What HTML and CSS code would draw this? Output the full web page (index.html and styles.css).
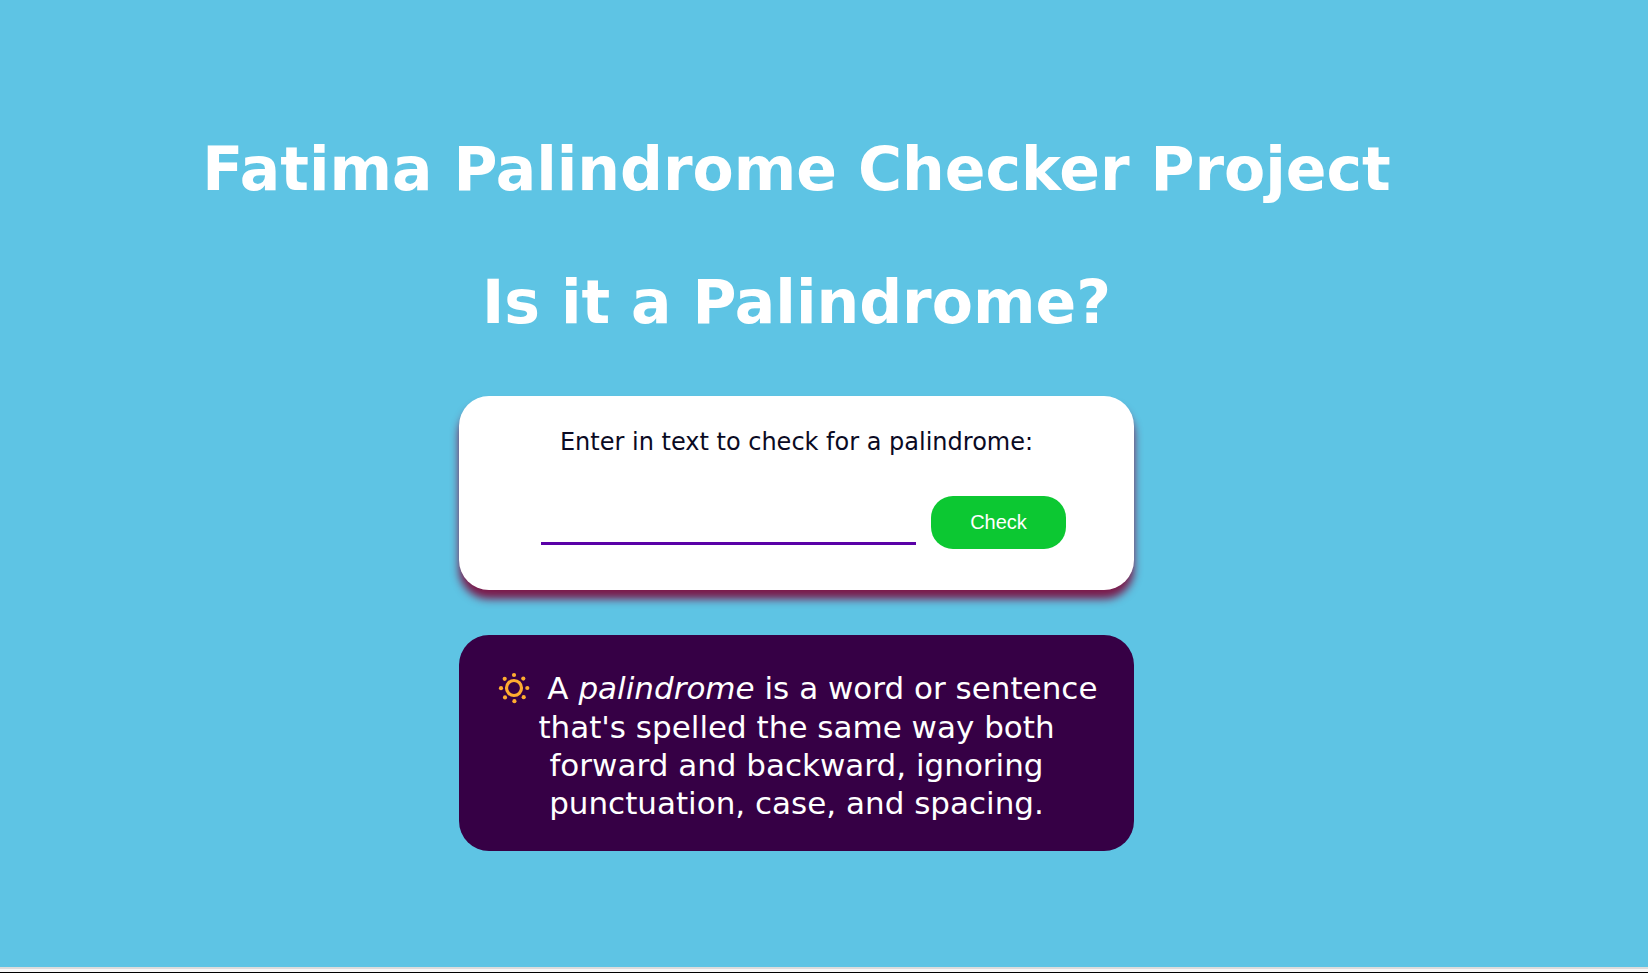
FILE: index.html
```html
<!DOCTYPE html>
<html lang="en">
<head>
<meta charset="utf-8">
<meta name="viewport" content="width=device-width, initial-scale=1">
<title>Palindrome Checker</title>
<link rel="stylesheet" href="styles.css">
</head>
<body>
<main class="page">
  <h1 class="title">Fatima Palindrome Checker Project</h1>
  <h1 class="title">Is it a Palindrome?</h1>
  <form class="checker">
    <label class="checker-label" for="text-input">Enter in text to check for a palindrome:</label>
    <div class="checker-row">
      <input class="checker-input" id="text-input" type="text">
      <button class="checker-button" type="button">Check</button>
    </div>
  </form>
  <section class="definition">
    <p class="definition-text">
      <svg class="sun" viewBox="0 0 40 40" aria-hidden="true">
        <circle cx="20" cy="20" r="7.5" fill="none" stroke="#ffac30" stroke-width="3.2"/>
        <g fill="#ffac30">
          <circle cx="20" cy="7" r="2.1"/><circle cx="20.4" cy="33.2" r="2.1"/>
          <circle cx="7" cy="20.2" r="2.1"/><circle cx="33.3" cy="20" r="2.1"/>
          <circle cx="10.7" cy="10.8" r="2.1"/><circle cx="29.3" cy="10.6" r="2.1"/>
          <circle cx="11" cy="29.4" r="2.1"/><circle cx="29.7" cy="29.2" r="2.1"/>
        </g>
      </svg>
      A <em>palindrome</em> is a word or sentence that's spelled the same way both forward and backward, ignoring punctuation, case, and spacing.
    </p>
  </section>
</main>
<footer class="edge"></footer>
</body>
</html>
```
FILE: styles.css
```css
* {
  box-sizing: border-box;
}

body {
  margin: 0;
  min-height: 100vh;
  display: flex;
  flex-direction: column;
  background: #5ec4e4;
  color: #fff;
  font-family: Verdana, "DejaVu Sans", sans-serif;
}

.page {
  flex: 1;
  display: flex;
  flex-direction: column;
  align-items: center;
  padding: 133px 55px 0 0;
}

.title {
  margin: 0 0 60px;
  font-size: 60px;
  line-height: 73px;
  text-align: center;
}

.title + .title {
  margin-bottom: 57px;
}

.checker,
.definition {
  width: 100%;
  max-width: 675px;
  border-radius: 30px;
}

.checker {
  display: flex;
  flex-direction: column;
  align-items: center;
  margin-bottom: 45px;
  padding: 32px 0 41px;
  background: #fff;
  box-shadow: 0 9px 9px #7b1a4b;
}

.checker-label {
  margin-bottom: 39px;
  color: #0a0a23;
  font-size: 24px;
  line-height: 29px;
}

.checker-row {
  display: flex;
  gap: 15px;
  padding-left: 14px;
}

.checker-input {
  width: 375px;
  height: 49px;
  border: 0;
  border-bottom: 3px solid #5a01a7;
  background: transparent;
  font-size: 20px;
  text-align: center;
  outline: none;
}

.checker-button {
  width: 135px;
  height: 53px;
  border: 0;
  border-radius: 22px;
  background: #0cc832;
  color: #fff;
  font-family: "Liberation Sans", Arial, sans-serif;
  font-size: 20px;
}

.definition {
  padding: 34px 30px 29px;
  background: #360045;
}

.definition-text {
  margin: 0;
  font-size: 31px;
  line-height: 38px;
  text-align: center;
}

.sun {
  width: 40px;
  height: 40px;
  margin: -8px 4px 0 -2px;
  vertical-align: -9px;
}

.edge {
  height: 6px;
  border-top: 2px solid #dcdcdc;
  border-bottom: 1px solid #000;
  background: #f8f8f8;
}
```
